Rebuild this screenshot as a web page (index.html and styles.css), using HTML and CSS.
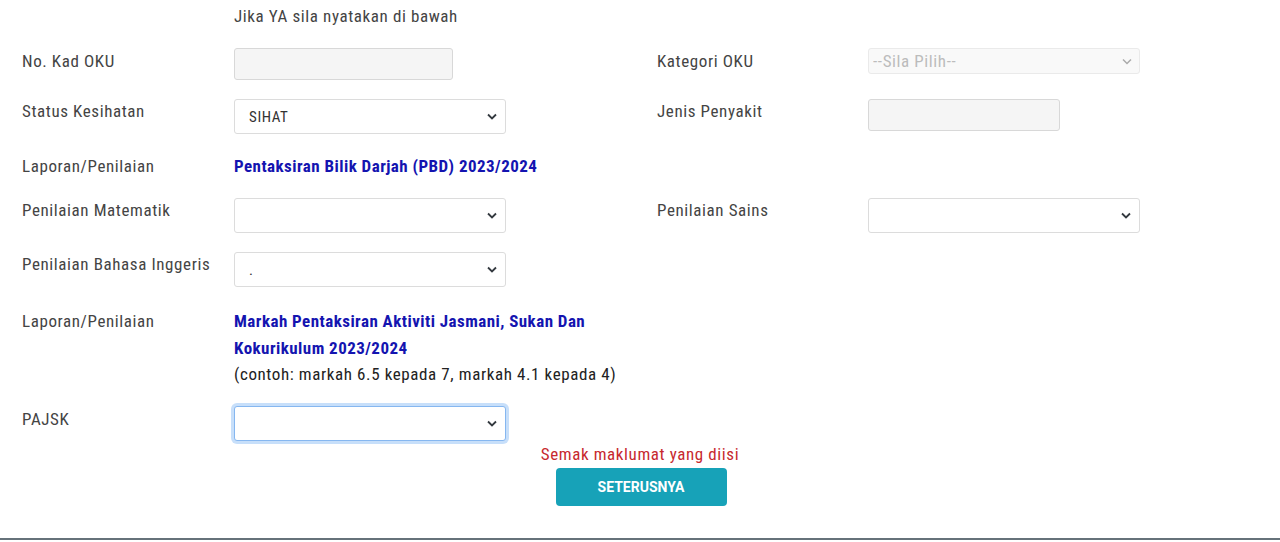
FILE: index.html
```html
<!DOCTYPE html>
<html lang="ms">
<head>
<meta charset="utf-8">
<title>Borang</title>
<link rel="stylesheet" href="styles.css">
</head>
<body>
<div class="card">
  <div class="note">Jika YA sila nyatakan di bawah</div>

  <div class="row r1">
    <div class="label">No. Kad OKU</div>
    <div class="ctl"><input class="field disabled w219" type="text" disabled></div>
    <div class="label">Kategori OKU</div>
    <div class="ctl"><select class="sel sel-dis" disabled><option>--Sila Pilih--</option></select></div>
  </div>

  <div class="row r2">
    <div class="label">Status Kesihatan</div>
    <div class="ctl"><select class="sel sel-main"><option>SIHAT</option></select></div>
    <div class="label">Jenis Penyakit</div>
    <div class="ctl"><input class="field disabled w192" type="text" disabled></div>
  </div>

  <div class="row r3">
    <div class="label">Laporan/Penilaian</div>
    <div class="ctl"><div class="title">Pentaksiran Bilik Darjah (PBD) 2023/2024</div></div>
  </div>

  <div class="row r4">
    <div class="label">Penilaian Matematik</div>
    <div class="ctl"><select class="sel sel-main"><option></option></select></div>
    <div class="label">Penilaian Sains</div>
    <div class="ctl"><select class="sel sel-main"><option></option></select></div>
  </div>

  <div class="row r5">
    <div class="label">Penilaian Bahasa Inggeris</div>
    <div class="ctl"><select class="sel sel-main"><option>.</option></select></div>
  </div>

  <div class="row r6">
    <div class="label">Laporan/Penilaian</div>
    <div class="ctl">
      <div class="title multi">Markah Pentaksiran Aktiviti Jasmani, Sukan Dan<br>Kokurikulum 2023/2024</div>
      <div class="hint">(contoh: markah 6.5 kepada 7, markah 4.1 kepada 4)</div>
    </div>
  </div>

  <div class="row r7">
    <div class="label">PAJSK</div>
    <div class="ctl"><select class="sel sel-main focus"><option></option></select></div>
  </div>

  <div class="actions">
    <div class="warn">Semak maklumat yang diisi</div>
    <button class="btn" type="button">SETERUSNYA</button>
  </div>
</div>
</body>
</html>
```

FILE: styles.css
```css
html, body {
  margin: 0;
  padding: 0;
  background: #ffffff;
}
body {
  font-family: "Roboto Condensed", "Roboto", "Liberation Sans Narrow", sans-serif;
  font-stretch: 75%;
  font-size: 17px;
  letter-spacing: 0.6px;
  color: #444;
}
.card {
  height: 540px;
  border-bottom: 2px solid #66727a;
  box-sizing: border-box;
  display: flex;
  flex-direction: column;
}
.note {
  margin: 4px 0 0 234px;
  line-height: 24px;
  color: #444;
}
.row {
  display: grid;
  grid-template-columns: 212px 423px 211px 1fr;
  padding-left: 22px;
  align-items: start;
}
.label {
  line-height: 24px;
  color: #444;
}
.r1 { margin-top: 20px; }
.r1 .label { margin-top: 1px; }
.r2 { margin-top: 19px; }
.r2 .label { margin-top: 0px; }
.r3 { margin-top: 20px; }
.r4 { margin-top: 20px; }
.r5 { margin-top: 19px; }
.r6 { margin-top: 21px; }
.r6 .label { margin-top: 1px; }
.r7 { margin-top: 18px; }
.r7 .label { margin-top: 1px; }

.field {
  display: block;
  height: 32px;
  box-sizing: border-box;
  border: 1px solid #d8d8d8;
  border-radius: 3px;
  background: #f5f5f5;
  margin: 0;
  padding: 0;
}
.w219 { width: 219px; }
.w192 { width: 192px; }

.sel {
  display: block;
  appearance: none;
  -webkit-appearance: none;
  box-sizing: border-box;
  margin: 0;
  font-family: inherit;
  font-stretch: 75%;
  letter-spacing: 0.6px;
  border: 1px solid #dcdcdc;
  border-radius: 3px;
  background-color: #fff;
  background-repeat: no-repeat;
}
.sel-main {
  width: 272px;
  height: 35px;
  padding: 0 30px 0 14px;
  font-size: 15px;
  color: #333;
  background-image: url("data:image/svg+xml,%3Csvg xmlns='http://www.w3.org/2000/svg' width='10' height='7' viewBox='0 0 10 7'%3E%3Cpath d='M1 1.5l4 4 4-4' fill='none' stroke='%23343a40' stroke-width='1.8'/%3E%3C/svg%3E");
  background-position: right 8px center;
}
.sel-dis {
  width: 272px;
  height: 26px;
  padding: 0 30px 0 4px;
  font-size: 17px;
  color: #a0a0a0;
  background-color: #f7f7f7;
  border-color: #e2e2e2;
  background-image: url("data:image/svg+xml,%3Csvg xmlns='http://www.w3.org/2000/svg' width='10' height='7' viewBox='0 0 10 7'%3E%3Cpath d='M1 1.5l4 4 4-4' fill='none' stroke='%23888' stroke-width='1.5'/%3E%3C/svg%3E");
  background-position: right 7px center;
}
.focus {
  border-color: #86b7f0;
  box-shadow: 0 0 0 3px rgba(0, 110, 230, 0.22);
  outline: none;
}

.title {
  color: #1414b0;
  font-weight: 700;
  letter-spacing: 0.45px;
  line-height: 24px;
}
.r6 .title, .r6 .hint {
  line-height: 26.5px;
}
.hint {
  color: #222;
}

.actions {
  display: flex;
  flex-direction: column;
  align-items: center;
  margin-top: 1px;
}
.warn {
  color: #c7282e;
  line-height: 24px;
}
.btn {
  margin-top: 2px;
  margin-left: 2px;
  width: 171px;
  height: 38px;
  border: none;
  border-radius: 4px;
  background: #17a2b8;
  color: #fff;
  font-family: "Roboto", sans-serif;
  font-stretch: 100%;
  font-weight: 700;
  font-size: 14px;
  letter-spacing: 0;
  padding: 0;
}
```
